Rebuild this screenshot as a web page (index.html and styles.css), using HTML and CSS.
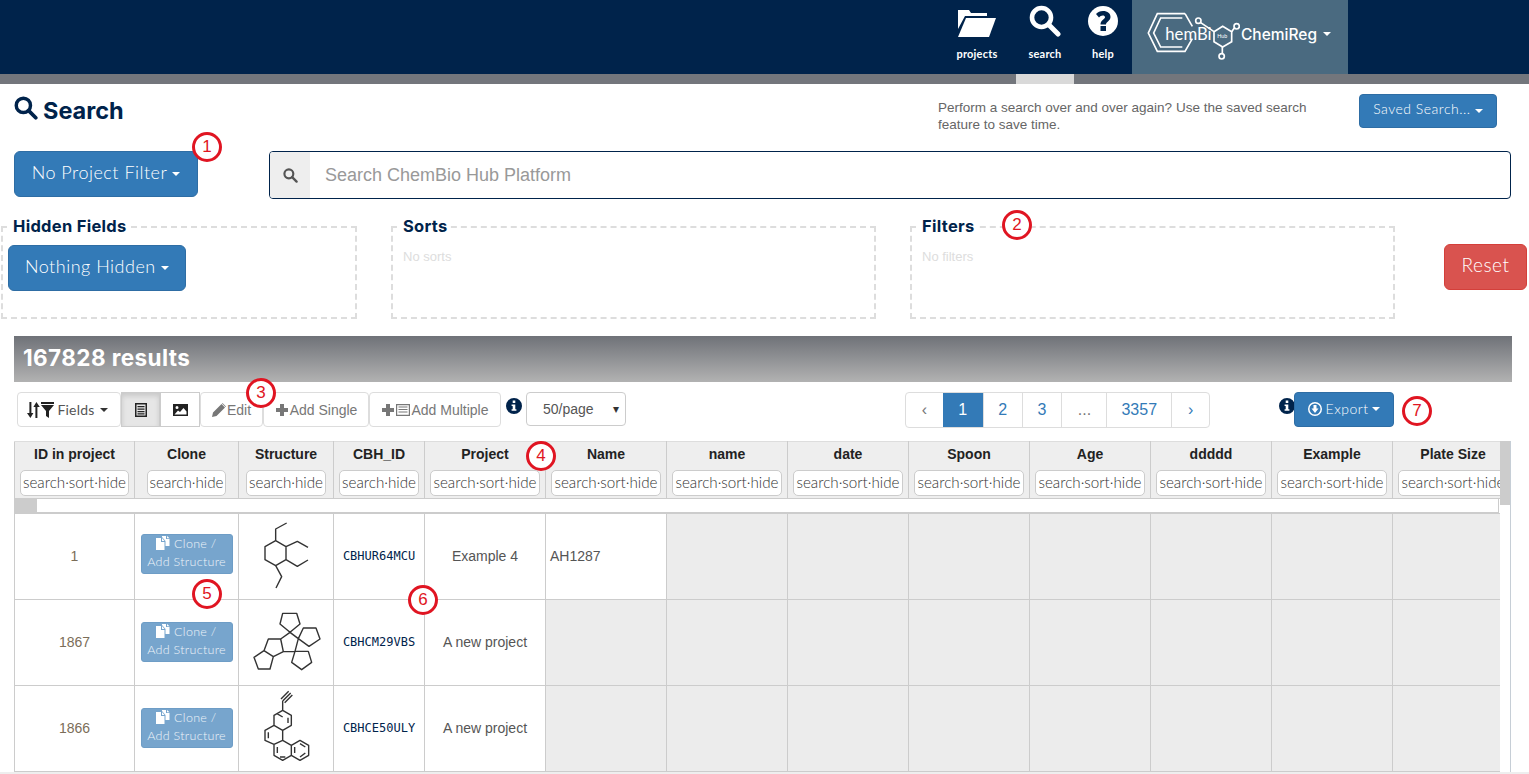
FILE: index.html
```html
<!DOCTYPE html>
<html>
<head>
  <meta charset="UTF-8" />
  <title>ChemiReg Search</title>
  <link rel="stylesheet" href="styles.css">
</head>
<body>

  <svg class="defs" width="0" height="0">
    <defs>
      <symbol id="i-search" viewBox="0 0 32 32">
        <circle cx="12.5" cy="12.5" r="9.5" fill="none" stroke="currentColor" stroke-width="4.6"/>
        <path d="M19.5 19.5 L29 29" fill="none" stroke="currentColor" stroke-width="5" stroke-linecap="round"/>
      </symbol>
      <symbol id="i-info" viewBox="0 0 16 16">
        <path fill-rule="evenodd" fill="currentColor" d="M8 0a8 8 0 1 1 0 16A8 8 0 0 1 8 0zM6.7 2.6v2.5h2.6V2.6zM5.6 6.4v1.5h1.1v3.4H5.6v1.5h4.8v-1.5H9.3V6.4z"/>
      </symbol>
      <symbol id="i-plus" viewBox="0 0 14 14">
        <path fill="currentColor" d="M5 1h4v4h4v4H9v4H5V9H1V5h4z"/>
      </symbol>
      <symbol id="i-files" viewBox="0 0 14 14">
        <path fill="currentColor" d="M0 2h5v4h3.500v8H0zM6 2l2.500 3H6zM6 0h4v3h3.500v7H9.500V5L6 1zM11 0l2.500 2.300H11z"/>
      </symbol>
    </defs>
  </svg>

  <header class="topbar">
    <a class="nav-item nav-projects">
      <svg class="nav-icon" viewBox="0 0 40 32" width="40" height="32">
        <path fill="#fff" d="M1 5h11l2 3h16v3H8L1 24z"/>
        <path fill="#fff" d="M9 13h30l-7 19H1z"/>
      </svg>
      <span>projects</span>
    </a>
    <a class="nav-item">
      <svg class="nav-icon" width="32" height="32"><use href="#i-search"/></svg>
      <span>search</span>
    </a>
    <a class="nav-item">
      <svg class="nav-icon" viewBox="0 0 30 30" width="30" height="30">
        <circle cx="15" cy="15" r="15" fill="#fff"/>
        <path fill="#00234b" d="M15 5c4.600 0 7.500 2.500 7.500 6 0 4-4.500 4.600-4.500 7.500h-5.500c0-4.500 4.500-5.500 4.500-7.300 0-1.200-1-1.700-2.200-1.700-1.500 0-2.800.8-3.800 2L8 8c1.800-2 4-3 7-3zM12.500 20h5.500v5h-5.500z"/>
      </svg>
      <span>help</span>
    </a>
    <div class="brand">
      <svg class="brand-logo" viewBox="0 0 300 180" width="100" height="60">
        <g fill="none" stroke="#fff" stroke-width="5">
          <path d="M135 17H52L25 75l27 55h83l22-38"/>
          <path d="M135 17l22 38"/>
          <path d="M127 30H62L41 75l21 42h65"/>
          <path d="M248 55l27 16v30l-27 16-26-16V71z"/>
          <circle cx="175" cy="38" r="8"/>
          <circle cx="290" cy="55" r="8"/>
          <circle cx="245" cy="145" r="8"/>
          <path d="M182 44l40 27M275 71l8-11M247 117v20"/>
        </g>
        <text x="76" y="97" class="brand-mark">hemBi</text>
        <text x="232" y="90" class="brand-hub">Hub</text>
      </svg>
      <span class="brand-name">ChemiReg</span>
      <span class="caret"></span>
    </div>
  </header>
  <div class="subbar"><div class="subbar-tab"></div></div>

  <main class="page">

    <div class="title-row">
      <h1 class="page-title"><svg width="24" height="24"><use href="#i-search"/></svg>Search</h1>
      <p class="saved-hint">Perform a search over and over again? Use the saved search feature to save time.</p>
      <button class="btn btn-sm saved-btn">Saved Search... <span class="caret"></span></button>
    </div>

    <div class="search-row">
      <button class="btn btn-lg project-btn">No Project Filter <span class="caret"></span></button>
      <div class="search-box">
        <span class="search-addon"><svg width="15" height="15"><use href="#i-search"/></svg></span>
        <span class="search-placeholder">Search ChemBio Hub Platform</span>
      </div>
    </div>

    <div class="panel-row">
      <fieldset class="panel panel-hidden">
        <legend>Hidden Fields</legend>
        <button class="btn btn-lg hidden-btn">Nothing Hidden <span class="caret"></span></button>
      </fieldset>
      <fieldset class="panel panel-sorts">
        <legend>Sorts</legend>
        <p class="panel-empty">No sorts</p>
      </fieldset>
      <fieldset class="panel panel-filters">
        <legend>Filters</legend>
        <p class="panel-empty">No filters</p>
      </fieldset>
      <button class="btn btn-lg reset-btn">Reset</button>
    </div>

    <div class="results-bar">167828 results</div>

    <div class="toolbar">
      <button class="tool tool-fields">
        <svg viewBox="0 0 28 16" width="28" height="16">
          <path fill="#222" d="M3 0h2.500v11H8l-3.750 5L0 11h3zM10.500 16V5H8l3.750-5L16 5h-3v11z" transform="scale(.8 1)"/>
          <path fill="#222" d="M14 0h13v2H14zM14 3h13l-5 6v7l-3-2V9z"/>
        </svg>
        Fields <span class="caret caret-dark"></span>
      </button>
      <button class="tool tool-icon tool-active">
        <svg viewBox="0 0 14 14" width="14" height="14">
          <path fill-rule="evenodd" fill="#222" d="M1 0h12v14H1zM2.500 1.500v11h9v-11zM3.500 3h7v1.300h-7zM3.500 5.500h7v1.300h-7zM3.500 8h7v1.300h-7zM3.500 10.300h7v1.200h-7z"/>
        </svg>
      </button>
      <button class="tool tool-icon tool-image">
        <svg viewBox="0 0 15 14" width="15" height="14">
          <path fill-rule="evenodd" fill="#222" d="M0 1h15v12H0zM1.500 11.500h12v-3L10.500 5 7 9 5 7.500zM4 3a1.500 1.500 0 1 0 0 3 1.500 1.500 0 0 0 0-3z"/>
        </svg>
      </button>
      <button class="tool tool-muted tool-edit">
        <svg viewBox="0 0 14 14" width="14" height="14">
          <path fill="#777" d="M0 14l1-4.500L9.500 1 13 4.500 4.500 13zM10.500 0l3.500 3.500-.5.500L10 .5z"/>
        </svg>Edit
      </button>
      <button class="tool tool-muted tool-single"><svg width="14" height="14"><use href="#i-plus"/></svg>Add Single</button>
      <button class="tool tool-muted tool-multi">
        <svg width="14" height="14"><use href="#i-plus"/></svg>
        <svg viewBox="0 0 14 14" width="14" height="14">
          <path fill-rule="evenodd" fill="#777" d="M0 1h14v12H0zM1.200 2.200v9.600h11.600V2.200zM2.500 3.500h9v1h-9zM2.500 6h9v1h-9zM2.500 8.500h9v1h-9z"/>
        </svg>Add Multiple
      </button>
      <svg class="info-icon info-left" width="16" height="16"><use href="#i-info"/></svg>
      <div class="page-size">50/page<span class="page-size-arrow">▾</span></div>

      <nav class="pager">
        <a class="pager-prev">‹</a>
        <a class="pager-on">1</a>
        <a class="pager-2">2</a>
        <a class="pager-3">3</a>
        <a class="pager-gap">...</a>
        <a class="pager-last">3357</a>
        <a class="pager-next">›</a>
      </nav>

      <svg class="info-icon info-right" width="16" height="16"><use href="#i-info"/></svg>
      <button class="btn export-btn">
        <svg viewBox="0 0 14 14" width="14" height="14">
          <path fill-rule="evenodd" fill="#fff" d="M7 0a7 7 0 1 1 0 14A7 7 0 0 1 7 0zM7 1.500a5.500 5.500 0 1 0 0 11 5.500 5.500 0 0 0 0-11zM5.500 3h3v3.500h2L7 11 3.500 6.500h2z"/>
        </svg>
        Export <span class="caret"></span>
      </button>
    </div>

    <div class="grid-wrap">
      <div class="grid">
        <table class="grid-table grid-head">
          <colgroup>
            <col class="c-id"><col class="c-clone"><col class="c-struct"><col class="c-cbh">
            <col class="c-std"><col class="c-std"><col class="c-std"><col class="c-std">
            <col class="c-std"><col class="c-std"><col class="c-std"><col class="c-std"><col class="c-std">
          </colgroup>
          <tr>
            <th>ID in project<span class="col-tools">search·sort·hide</span></th>
            <th>Clone<span class="col-tools">search·hide</span></th>
            <th>Structure<span class="col-tools">search·hide</span></th>
            <th>CBH_ID<span class="col-tools">search·hide</span></th>
            <th>Project<span class="col-tools">search·sort·hide</span></th>
            <th>Name<span class="col-tools">search·sort·hide</span></th>
            <th>name<span class="col-tools">search·sort·hide</span></th>
            <th>date<span class="col-tools">search·sort·hide</span></th>
            <th>Spoon<span class="col-tools">search·sort·hide</span></th>
            <th>Age<span class="col-tools">search·sort·hide</span></th>
            <th>ddddd<span class="col-tools">search·sort·hide</span></th>
            <th>Example<span class="col-tools">search·sort·hide</span></th>
            <th>Plate Size<span class="col-tools">search·sort·hide</span></th>
          </tr>
        </table>

        <div class="hscroll"><div class="hscroll-thumb"></div></div>

        <table class="grid-table grid-body">
          <colgroup>
            <col class="c-id"><col class="c-clone"><col class="c-struct"><col class="c-cbh">
            <col class="c-std"><col class="c-std"><col class="c-std"><col class="c-std">
            <col class="c-std"><col class="c-std"><col class="c-std"><col class="c-std"><col class="c-std">
          </colgroup>
          <tr>
            <td class="cell-id">1</td>
            <td class="cell-clone cell-clone-first"><button class="clone-btn"><svg width="14" height="14"><use href="#i-files"/></svg> Clone /<br>Add Structure</button></td>
            <td class="cell-struct">
              <svg viewBox="0 0 279 255" width="93" height="85" class="mol">
                <path d="M140 27L107 45V80L138 98V137L107 155L75 137V98L107 80M138 98L172 82L204 100M138 137L172 157L204 138M107 155L125 188L108 222"/>
              </svg>
            </td>
            <td class="cell-code">CBHUR64MCU</td>
            <td class="cell-project">Example 4</td>
            <td class="cell-name">AH1287</td>
            <td class="cell-off"></td><td class="cell-off"></td><td class="cell-off"></td><td class="cell-off"></td><td class="cell-off"></td><td class="cell-off"></td><td class="cell-off"></td>
          </tr>
          <tr>
            <td class="cell-id">1867</td>
            <td class="cell-clone"><button class="clone-btn"><svg width="14" height="14"><use href="#i-files"/></svg> Clone /<br>Add Structure</button></td>
            <td class="cell-struct">
              <svg viewBox="0 -12 279 255" width="93" height="85" class="mol">
                <path d="M150 85L120 60L128 28H170L180 60L150 85L175 104L165 142L130 143L122 105L150 85M175 104L190 72H228L240 105L207 127L175 104M165 142H205L215 175L185 197L155 175L165 142M122 105H85L72 140L100 158L130 143M72 140L42 160L55 195H90L100 158"/>
              </svg>
            </td>
            <td class="cell-code">CBHCM29VBS</td>
            <td class="cell-project">A new project</td>
            <td class="cell-off"></td><td class="cell-off"></td><td class="cell-off"></td><td class="cell-off"></td><td class="cell-off"></td><td class="cell-off"></td><td class="cell-off"></td><td class="cell-off"></td>
          </tr>
          <tr>
            <td class="cell-id">1866</td>
            <td class="cell-clone"><button class="clone-btn"><svg width="14" height="14"><use href="#i-files"/></svg> Clone /<br>Add Structure</button></td>
            <td class="cell-struct">
              <svg viewBox="-30 -3 279 255" width="93" height="85" class="mol">
                <path d="M98 42V70L124 85V115L98 130L72 115V85L98 70M72 115L45 130V160L72 172L98 160V130M98 160L124 175V205L98 220L72 205V172M124 175L150 160L176 175V205L150 220L124 205M98 42L122 18M93 36L116 13M104 47L127 24M81 80L98 90M114 92V108M55 136V154M82 180V198M106 210L90 210M150 170L166 180M166 198L150 210M134 180L134 198"/>
              </svg>
            </td>
            <td class="cell-code">CBHCE50ULY</td>
            <td class="cell-project">A new project</td>
            <td class="cell-off"></td><td class="cell-off"></td><td class="cell-off"></td><td class="cell-off"></td><td class="cell-off"></td><td class="cell-off"></td><td class="cell-off"></td><td class="cell-off"></td>
          </tr>
        </table>
      </div>
      <div class="vscroll"><div class="vscroll-thumb"></div></div>
    </div>
  </main>
  <div class="page-foot"></div>

  <!-- numbered callouts -->
  <span class="mark mark-1">1</span>
  <span class="mark mark-2">2</span>
  <span class="mark mark-3">3</span>
  <span class="mark mark-4">4</span>
  <span class="mark mark-5">5</span>
  <span class="mark mark-6">6</span>
  <span class="mark mark-7">7</span>

</body>
</html>
```

FILE: styles.css
```css
* {
  box-sizing: border-box;
}

html, body {
  height: 774px;
  overflow: hidden;
}

body {
  margin: 0;
  background: #fff;
  color: #333;
  font-family: "Liberation Sans", Arial, sans-serif;
  font-size: 14px;
  position: relative;
}

.defs {
  position: absolute;
}

button {
  font-family: inherit;
  cursor: pointer;
}

/* top navigation */
.topbar {
  height: 74px;
  background: #00234b;
  color: #fff;
  display: flex;
  justify-content: flex-end;
  padding-right: 181px;
}

.nav-item {
  width: 58px;
  display: flex;
  flex-direction: column;
  align-items: center;
  font-family: Lato, sans-serif;
  font-size: 11px;
  font-weight: 700;
  letter-spacing: .2px;
  color: #fff;
}

.nav-projects {
  width: 68px;
  padding-right: 10px;
}

.nav-icon {
  height: 32px;
  margin-top: 5px;
  margin-bottom: 10px;
}

.brand {
  width: 216px;
  background: #4a6a80;
  display: flex;
  align-items: center;
  padding-left: 8px;
  padding-bottom: 6px;
}

.brand-logo {
  margin-top: 8px;
  flex: none;
}

.brand-mark {
  fill: #fff;
  font-family: Lato, sans-serif;
  font-size: 50px;
}

.brand-hub {
  fill: #fff;
  font-family: Lato, sans-serif;
  font-size: 16px;
}

.brand-name {
  font-family: Inter, sans-serif;
  font-weight: 500;
  font-size: 15.5px;
  margin-left: 1px;
}

.brand .caret {
  margin-left: 6px;
}

.subbar {
  height: 10px;
  background: #73767c;
  padding-left: 1016px;
}

.subbar-tab {
  width: 58px;
  height: 10px;
  background: #d9d9d9;
}

.caret {
  display: inline-block;
  width: 0;
  height: 0;
  vertical-align: middle;
  border-top: 4px solid #fff;
  border-left: 4px solid transparent;
  border-right: 4px solid transparent;
}

.caret-dark {
  border-top-color: #333;
}

/* buttons */
.btn {
  background: #337ab7;
  border: 1px solid #2e6da4;
  border-radius: 4px;
  color: #fff;
  font-family: Lato, sans-serif;
  font-weight: 300;
  letter-spacing: .5px;
}

.btn-sm {
  font-size: 14px;
  padding: 0 0 5px;
}

.btn-lg {
  font-size: 18px;
  border-radius: 6px;
  height: 46px;
  padding: 0 0 5px;
}

/* page */
.page {
  padding: 0 17px 0 14px;
}

.title-row {
  height: 67px;
  display: flex;
  align-items: flex-start;
}

.page-title {
  margin: 12px 0 0;
  width: 924px;
  font-family: Inter, sans-serif;
  font-size: 23.5px;
  font-weight: 700;
  color: #00234b;
  display: flex;
  align-items: center;
  gap: 5px;
  line-height: 30px;
  flex: none;
}

.page-title svg {
  margin-top: -6px;
}

.saved-hint {
  margin: 15px 41px 0 0;
  width: 385px;
  flex: none;
  font-size: 13.5px;
  line-height: 17px;
  color: #666;
}

.saved-btn {
  margin-top: 10px;
  margin-left: -5px;
  width: 138px;
  height: 34px;
  flex: none;
}

.search-row {
  display: flex;
  height: 65px;
  align-items: flex-start;
}

.project-btn {
  width: 184px;
  flex: none;
}

.search-box {
  margin-left: 71px;
  width: 1242px;
  flex: none;
  height: 48px;
  border: 1px solid #00234b;
  border-radius: 4px;
  display: flex;
  align-items: center;
  overflow: hidden;
}

.search-addon {
  width: 40px;
  height: 46px;
  background: #eee;
  color: #555;
  display: flex;
  align-items: center;
  justify-content: center;
}

.search-placeholder {
  padding-left: 15px;
  font-size: 18px;
  color: #999;
}

.panel-row {
  margin-left: -13px;
  display: flex;
  height: 103px;
  align-items: flex-start;
}

.panel {
  margin: 0;
  height: 103px;
  flex: none;
  border: 2px dashed #ddd;
  padding: 0 5px;
}

.panel legend {
  margin-left: 3px;
  padding: 0 2px 2px;
  font-family: Inter, sans-serif;
  font-size: 16.5px;
  font-weight: 700;
  letter-spacing: .3px;
  line-height: 20px;
  color: #00234b;
}

.panel-hidden {
  width: 356px;
}

.panel-sorts {
  width: 485px;
  margin-left: 34px;
}

.panel-filters {
  width: 485px;
  margin-left: 34px;
}

.panel-empty {
  margin: 11px 5px 0;
  font-size: 13px;
  color: #ddd;
}

.hidden-btn {
  width: 178px;
  margin-top: 7px;
}

.reset-btn {
  margin-left: 49px;
  margin-top: 28px;
  width: 83px;
  flex: none;
  font-size: 19px;
  padding-bottom: 6px;
  background: #d9534f;
  border-color: #d43f3a;
}

.results-bar {
  margin-top: 17px;
  width: 1498px;
  height: 46px;
  background: linear-gradient(#6f7278, #b2b2b2);
  color: #fff;
  font-family: Inter, sans-serif;
  font-size: 22.5px;
  font-weight: 700;
  letter-spacing: .4px;
  line-height: 43px;
  padding-left: 9px;
}

/* toolbar */
.toolbar {
  margin-top: 10px;
  margin-left: 3px;
  height: 49px;
  display: flex;
  align-items: flex-start;
}

.tool {
  height: 35px;
  background: #fff;
  border: 1px solid #ddd;
  border-radius: 4px;
  color: #333;
  font-size: 14px;
  font-family: "Liberation Sans", sans-serif;
  padding: 0;
  display: flex;
  align-items: center;
  justify-content: center;
  gap: 1px;
  flex: none;
}

.tool-fields {
  width: 104px;
  font-family: Lato, sans-serif;
  font-weight: 400;
  letter-spacing: .2px;
  color: #555;
  gap: 2px;
  padding-right: 3px;
}

.tool-fields .caret {
  margin-left: 3px;
}

.tool-icon {
  width: 39px;
  border-radius: 0;
  border-color: #ccc;
}

.tool-active {
  background: #e6e6e6;
  box-shadow: inset 0 3px 5px rgba(0,0,0,.125);
}

.tool-image {
  width: 40px;
}

.tool-muted {
  color: #777;
}

.tool-edit {
  width: 63px;
}

.tool-single {
  width: 106px;
}

.tool-multi {
  width: 132px;
}

.info-icon {
  color: #00234b;
  flex: none;
}

.info-left {
  margin-left: 5px;
  margin-top: 6px;
}

.page-size {
  margin-left: 4px;
  width: 100px;
  height: 34px;
  flex: none;
  border: 1px solid #ccc;
  border-radius: 4px;
  display: flex;
  align-items: center;
  justify-content: space-between;
  padding: 0 6px 0 16px;
  color: #555;
}

.page-size-arrow {
  font-size: 12px;
  color: #333;
}

.pager {
  margin-left: 279px;
  display: flex;
  height: 36px;
  flex: none;
  border: 1px solid #ddd;
  border-radius: 4px;
  width: 305px;
}

.pager a {
  display: flex;
  align-items: center;
  justify-content: center;
  border-left: 1px solid #ddd;
  color: #337ab7;
  font-size: 16px;
}

.pager-prev {
  width: 37px;
  border-left: 0 !important;
  color: #777 !important;
}

.pager-on {
  width: 40px;
  background: #337ab7;
  border-left: 0 !important;
  color: #fff !important;
}

.pager-2 {
  width: 39px;
}

.pager-3 {
  width: 40px;
}

.pager-gap {
  width: 45px;
  color: #777 !important;
}

.pager-last {
  width: 65px;
}

.pager-next {
  width: 38px;
}

.info-right {
  margin-left: 69px;
  margin-top: 6px;
}

.export-btn {
  width: 100px;
  height: 35px;
  flex: none;
  margin-left: -1px;
  font-size: 14px;
  padding: 0 0 2px;
  display: flex;
  align-items: center;
  justify-content: center;
  gap: 4px;
}

/* results table */
.grid-wrap {
  display: flex;
  width: 1497px;
  height: 331px;
}

.grid {
  width: 1486px;
  overflow: hidden;
}

.grid-table {
  border-collapse: collapse;
  table-layout: fixed;
  width: 1499px;
}

.c-id { width: 120px; }
.c-clone { width: 104px; }
.c-struct { width: 95px; }
.c-cbh { width: 91px; }
.c-std { width: 121px; }

.grid-head th {
  height: 57px;
  background: #eee;
  border: 1px solid #ccc;
  border-top: 1px solid #ddd;
  padding: 4px 0 0;
  font-size: 14px;
  line-height: 16px;
  color: #222;
  vertical-align: top;
  overflow: hidden;
}

.col-tools {
  display: block;
  width: max-content;
  margin: 8px auto 0;
  padding: 0 2px;
  height: 26px;
  line-height: 22px;
  background: #fff;
  border: 1px solid #ccc;
  border-radius: 5px;
  font-family: Lato, sans-serif;
  font-weight: 300;
  font-size: 15.2px;
  color: #333;
}

.hscroll {
  height: 14px;
  background: #fff;
  border-right: 1px solid #ccc;
  border-bottom: 1px solid #ccc;
  width: 1485px;
}

.hscroll-thumb {
  width: 23px;
  height: 13px;
  background: #ccc;
}

.grid-body td {
  height: 86px;
  border: 1px solid #ccc;
  padding: 0 0 2px;
  text-align: center;
  color: #555;
  overflow: hidden;
}

.grid-body .cell-id {
  color: #7b6d58;
}

.grid-body .cell-struct {
  line-height: 0;
  padding: 0;
}

.grid-body .cell-clone-first {
  padding-bottom: 6px;
}

.grid-body .cell-code {
  font-family: "DejaVu Sans Mono", monospace;
  font-size: 12px;
  color: #00234b;
}

.grid-body .cell-name {
  text-align: left;
  padding-left: 4px;
}

.grid-body .cell-off {
  background: #ececec;
}

.clone-btn {
  width: 92px;
  height: 40px;
  padding: 0 0 2px;
  background: #77a5cd;
  border: 1px solid #6e9dc6;
  border-radius: 3px;
  font-family: Lato, sans-serif;
  font-weight: 300;
  font-size: 12.5px;
  letter-spacing: .3px;
  line-height: 18px;
  color: #eef4f9;
}

.clone-btn svg {
  vertical-align: -2px;
  color: #fff;
}

.mol {
  display: inline-block;
}

.mol path {
  fill: none;
  stroke: #333;
  stroke-width: 4.2;
  stroke-linejoin: round;
}

.vscroll {
  width: 11px;
  border-right: 1px solid #c6ced6;
}

.vscroll-thumb {
  width: 10px;
  height: 64px;
  background: #ccc;
}

.page-foot {
  height: 2px;
  background: #eee;
}

/* numbered callouts, placed on top of the page */
.mark {
  position: absolute;
  width: 30px;
  height: 30px;
  border: 3px solid #e01522;
  border-radius: 50%;
  background: #fff;
  color: #e01522;
  font-size: 17px;
  line-height: 24px;
  text-align: center;
}

.mark-1 { left: 192px; top: 132px; }
.mark-2 { left: 1002px; top: 210px; }
.mark-3 { left: 246px; top: 378px; }
.mark-4 { left: 526px; top: 441px; }
.mark-5 { left: 192px; top: 579px; }
.mark-6 { left: 408px; top: 585px; }
.mark-7 { left: 1402px; top: 396px; }
```
